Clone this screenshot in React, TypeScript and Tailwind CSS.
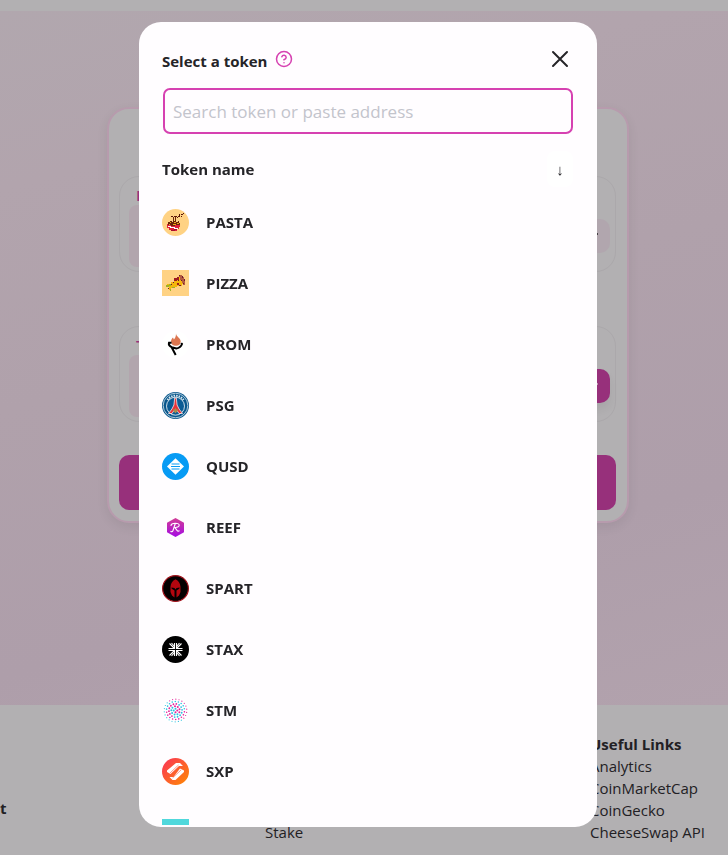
import type { ReactNode } from "react";

function Icon({ children }: { children: ReactNode }) {
  return (
    <svg viewBox="0 0 27 27" className="h-[27px] w-[27px] shrink-0" aria-hidden="true">
      {children}
    </svg>
  );
}

const PastaIcon = () => (
  <Icon>
    <circle cx="13.5" cy="13.5" r="13.5" fill="#ffd284" />
    <g shapeRendering="crispEdges">
      <path d="M5 15h13v3h-1v2h-2v2H9v-1H7v-2H5z" fill="#e0203c" />
      <path d="M6 17h3v1h4v1h3v1h-4v-1H8v-1H6z" fill="#fff" />
      <path d="M6 13h2v-1h2v1h1V8h1v4h1V8h1v5h2v-1h1v2h1v2h-5v1H9v-1H6z" fill="#6b2408" />
      <path d="M8 13h1v1H8zM12 13h2v1h-2zM15 14h2v1h-2zM7 15h1v1H7zM11 15h3v1h-3z" fill="#f0a21a" />
      <path d="M9 7h2v1H9zM12 7h3v1h-3zM15 8h1v1h-1zM16 7h2v1h-2zM17 5h1v2h-1zM19 5h2v1h-2zM21 4h1v1h-1zM19 7h1v1h-1z" fill="#5a1608" />
      <path d="M12 20h3v1h-3zM9 21h4v1H9z" fill="#a80d2b" />
    </g>
  </Icon>
);

const PizzaIcon = () => (
  <Icon>
    <path d="M0 0h27v26H0z" fill="#ffd284" />
    <g shapeRendering="crispEdges">
      <path d="M5 14h4v-2h3V9h3V7h3V6h2v5h2v3h-2v2h-5v1h-4v1H9v2H7v-3H5z" fill="#f4b60b" />
      <path d="M4 15h3v-1h2v2H7v1H4zM10 17h3v1h-3zM8 19h1v2H8z" fill="#9fb325" />
      <path d="M12 8h3V7h2v3h-2v1h-3zM15 13h2v2h-2z" fill="#9e1b20" />
      <path d="M17 5h3v2h2v4h1v4h-2v-2h-1v-3h-2V7h-1z" fill="#b45b40" />
      <path d="M17 5h1v1h-1zM20 6h1v2h-1zM22 9h1v2h-1zM19 10h1v1h-1zM21 13h1v1h-1zM16 10h1v1h-1zM11 12h1v1h-1zM9 14h1v1H9zM6 18h1v1H6zM17 15h2v1h-2z" fill="#6e1730" />
    </g>
  </Icon>
);

const PromIcon = () => (
  <Icon>
    <circle cx="13.5" cy="13.5" r="13.5" fill="#fff" />
    <path d="M14 2.5c.3 3.200 4.700 4.700 4.700 8 0 2.700-1.900 4.300-4.700 4.300-3 0-5-1.600-5-4.400 0-1.700 1-2.800 2-3.800l.900 1.900c1.500-1.500 2.100-3.500 2.100-6z" fill="#dc7650" />
    <path d="M9.500 11.800H7c-.6 2 .5 3.500 2.800 4.400l4.500 1.300c2.700-.4 4.800-1.900 5.700-4.500l-.8-1M9.500 16l4.200 8" fill="none" stroke="#000" strokeWidth="2" />
  </Icon>
);

const PsgIcon = () => (
  <Icon>
    <circle cx="13.5" cy="13.5" r="13.5" fill="#08568c" />
    <circle cx="13.5" cy="13.5" r="12.3" fill="none" stroke="#dce8ef" strokeWidth=".8" />
    <path d="M5.500 8a9.500 9.500 0 0 1 16 0" fill="none" stroke="#dce8ef" strokeWidth="2" strokeDasharray="1.500 1" />
    <circle cx="13.5" cy="14.2" r="9" fill="#0a5b94" stroke="#fff" strokeWidth=".8" />
    <path d="M12.700 6h1.600l.8 7 2 4 3.400 4.500h-3.500l-2-3h-3l-2 3H6.500l3.400-4.500 2-4z" fill="#e73339" stroke="#fff" strokeWidth=".7" />
    <path d="m13.500 15.800 1 1.700 1.500-.6-.6 2.300-1.900 2-1.900-2-.6-2.300 1.500.6z" fill="#aa8b4d" />
  </Icon>
);

const QusdIcon = () => (
  <Icon>
    <circle cx="13.5" cy="13.5" r="13.5" fill="#079bf4" />
    <path d="M13.500 5.200 22 13.500l-8.500 8.300L5 13.500z" fill="#fff" />
    <path d="M9.500 11h8M9 13.500h9M9.500 16h8" stroke="#079bf4" strokeWidth="1.200" />
  </Icon>
);

const ReefIcon = () => (
  <Icon>
    <defs>
      <linearGradient id="reef" x1="0" y1="0" x2="0" y2="1">
        <stop stopColor="#d23e96" />
        <stop offset="1" stopColor="#a40be3" />
      </linearGradient>
    </defs>
    <path d="m13.500 4 8.500 4.700v9.600L13.500 23 5 18.300V8.700z" fill="url(#reef)" />
    <path d="M9 12c-.3-1.800 1.500-2.700 4.200-2.700 2.700 0 4 .7 4 2 0 1.700-2.200 2.400-4.600 2.200M13.300 9.500 11 16.500c-.5 1.300-1.500 1.500-2.500.8m4.500-3.700 2 2.800c.7 1 1.700.9 2.500.2" fill="none" stroke="#fff" strokeWidth="1.100" />
  </Icon>
);

const SpartIcon = () => (
  <Icon>
    <circle cx="13.5" cy="13.5" r="12.9" fill="#050001" stroke="#a4141e" strokeWidth="1.2" />
    <path d="M13.500 4.200c3 1.200 4.700 4 5 7.500v5.300l-1.500 3.500-2.500 2v-7l2.800-1.700.3-1.200-3 .4-1.100 1.500-1.100-1.500-3-.4.3 1.200 2.800 1.700v7l-2.500-2L8.500 17v-5.300c.3-3.500 2-6.300 5-7.500z" fill="#b3060f" />
  </Icon>
);

const StaxIcon = () => (
  <Icon>
    <circle cx="13.5" cy="13.5" r="13.5" fill="#000" />
    <path d="M12.500 7v5.500H6.500M14.500 7v5.500h6M12.500 20v-5.500h-6M14.500 20v-5.500h6M7.500 7.500l4.500 4.500M9.500 7l2.500 3M19.500 7.500 15 12M17.500 7 15 10M7.500 19.500 12 15M9.500 20l2.500-3M19.500 19.500 15 15M17.500 20 15 17" fill="none" stroke="#fff" strokeWidth="1.100" />
  </Icon>
);

const RINGS = [
  { r: 1.8, n: 4, s: 1 },
  { r: 4.2, n: 9, s: 1 },
  { r: 6.6, n: 14, s: 0.9 },
  { r: 9, n: 18, s: 0.8 },
  { r: 11.3, n: 22, s: 0.6 },
];

const StmIcon = () => (
  <Icon>
    <circle cx="13.5" cy="13.5" r="13.5" fill="#fff" />
    {RINGS.flatMap(({ r, n, s }, ring) =>
      Array.from({ length: n }, (_, i) => {
        const turn = i / n;
        const a = turn * Math.PI * 2 + ring * 0.4;
        const pink = (turn + ring * 0.4) % 1 < 0.5;
        return (
          <circle
            key={`${ring}-${i}`}
            cx={13.5 + r * Math.cos(a)}
            cy={13.5 + r * Math.sin(a)}
            r={s}
            fill={pink ? "#e6229b" : "#2dc0e2"}
          />
        );
      }),
    )}
  </Icon>
);

const SxpIcon = () => (
  <Icon>
    <defs>
      <linearGradient id="sxp" x1="0" y1="0" x2="1" y2="1">
        <stop stopColor="#fa315b" />
        <stop offset="1" stopColor="#ff8b00" />
      </linearGradient>
    </defs>
    <circle cx="13.5" cy="13.5" r="13.5" fill="url(#sxp)" />
    <path d="M14 5h4l3 3h-4l-8.500 8L5 14v-1.500z" fill="#fff" />
    <path d="m18 10.500 4 2V14l-8.500 8h-3l-3-3h4z" fill="#fff" />
    <path d="m8 15 8.500-8M10.500 20l8.500-8" stroke="#ff5544" strokeWidth=".6" />
  </Icon>
);

const TealIcon = () => (
  <Icon>
    <path d="M0 0h27v27H0z" fill="#50d8dc" />
  </Icon>
);

const TOKENS = [
  { name: "PASTA", Logo: PastaIcon },
  { name: "PIZZA", Logo: PizzaIcon },
  { name: "PROM", Logo: PromIcon },
  { name: "PSG", Logo: PsgIcon },
  { name: "QUSD", Logo: QusdIcon },
  { name: "REEF", Logo: ReefIcon },
  { name: "SPART", Logo: SpartIcon },
  { name: "STAX", Logo: StaxIcon },
  { name: "STM", Logo: StmIcon },
  { name: "SXP", Logo: SxpIcon },
  { name: "", Logo: TealIcon },
];

const LINKS = ["Analytics", "CoinMarketCap", "CoinGecko", "CheeseSwap API"];

function SwapField({ label, primary }: { label: string; primary?: boolean }) {
  return (
    <section className="h-24 rounded-[20px] border border-[#aba8ab] px-[9px] pt-2">
      <p className="h-5 pl-[7px] text-[15px] leading-5 font-semibold text-[#97307b]">{label}</p>
      <div className="flex h-[62px] items-center rounded-lg bg-[linear-gradient(90deg,#b2a5ad_50%,#b2b0b2_50%)]">
        <button
          aria-label={`Choose ${label} token`}
          className={`-mr-1 ml-auto flex h-[34px] w-24 items-center justify-end rounded-[10px] pr-[11px] ${
            primary ? "bg-[#97307b] text-[#c9b5c3] shadow-[0_6px_10px_#00000010]" : "bg-[#b1a6ae] text-[#222]"
          }`}
        >
          <svg viewBox="0 0 10 6" className="w-[10px]" fill="none" stroke="currentColor" strokeWidth="1.5" aria-hidden="true">
            <path d="m1 5 4-4 4 0" />
          </svg>
        </button>
      </div>
    </section>
  );
}

function Backdrop() {
  return (
    <div className="flex min-h-screen flex-col bg-[#b2b0b2]">
      <header className="h-[11px]" />
      <main className="h-[694px] bg-[linear-gradient(165deg,#b1a7ae_0%,#b2a4ad_20%,#b0a1ab_45%,#ae9eaa_75%,#b2a2ad_100%)] pt-24 pl-2">
        <div className="mx-auto flex max-w-[522px] flex-col rounded-[22px] border-2 border-[#b79bad] bg-[#b2b0b2] pt-[67px] pr-[11px] pb-[11px] pl-[10px] shadow-[0_4px_12px_#00000012]">
          <SwapField label="From" />
          <div className="h-[54px]" />
          <SwapField label="To" primary />
          <button aria-label="Swap" className="mt-[33px] h-[55px] rounded-[10px] bg-[#97307b]" />
        </div>
      </main>
      <footer className="flex flex-1 text-[15px] leading-[22px] text-[#222024]">
        <p className="w-[265px] pt-[92px] font-bold">t</p>
        <a href="#stake" className="w-[325px] pt-[116px]">Stake</a>
        <nav aria-label="Useful Links" className="pt-7">
          <h2 className="font-bold">Useful Links</h2>
          {LINKS.map((link) => (
            <a key={link} href="#links" className="block">
              {link}
            </a>
          ))}
        </nav>
      </footer>
    </div>
  );
}

export default function App() {
  return (
    <div className="h-screen overflow-hidden font-['Open_Sans',sans-serif]">
      <Backdrop />
      <div className="fixed inset-0 flex justify-center pt-[22px] pb-7 pl-2">
        <div
          role="dialog"
          aria-labelledby="token-title"
          className="flex w-full max-w-[458px] flex-col rounded-[22px] bg-[#fffdff] px-6 pb-[2px] text-[15px] text-[#252428]"
        >
          <header className="flex h-[66px] items-center pt-3">
            <h1 id="token-title" className="-ml-px font-bold">Select a token</h1>
            <button aria-label="Help" className="mb-1 ml-2 text-[#d641b1]">
              <svg viewBox="0 0 24 24" className="h-[18px] w-[18px]" fill="none" stroke="currentColor" strokeWidth="2" strokeLinecap="round" aria-hidden="true">
                <circle cx="12" cy="12" r="10" />
                <path d="M9.100 9a3 3 0 0 1 5.800 1c0 2-3 3-3 3M12 17h.01" />
              </svg>
            </button>
            <button aria-label="Close" className="mb-1 ml-auto">
              <svg viewBox="0 0 26 26" className="h-[26px] w-[26px]" fill="none" stroke="currentColor" strokeWidth="2" strokeLinecap="round" aria-hidden="true">
                <path d="m6 6 14 14M20 6 6 20" />
              </svg>
            </button>
          </header>
          <input
            aria-label="Search token"
            placeholder="Search token or paste address"
            className="h-[46px] w-full shrink-0 rounded-[7px] border-2 border-[#d641b1] bg-transparent px-2 text-[17px] outline-none placeholder:text-[#c3c4cc]"
          />
          <div className="-ml-px flex h-[58px] shrink-0 items-center justify-between pt-3">
            <h2 className="font-bold">Token name</h2>
            <button aria-label="Sort tokens" className="h-9 w-[26px] rounded-lg bg-white">↓</button>
          </div>
          <ul className="-ml-px min-h-0 flex-1 overflow-hidden">
            {TOKENS.map(({ name, Logo }) => (
              <li key={name}>
                <button className="flex h-[61px] w-full items-center gap-[17px] text-left font-bold">
                  <Logo />
                  {name}
                </button>
              </li>
            ))}
          </ul>
        </div>
      </div>
    </div>
  );
}
